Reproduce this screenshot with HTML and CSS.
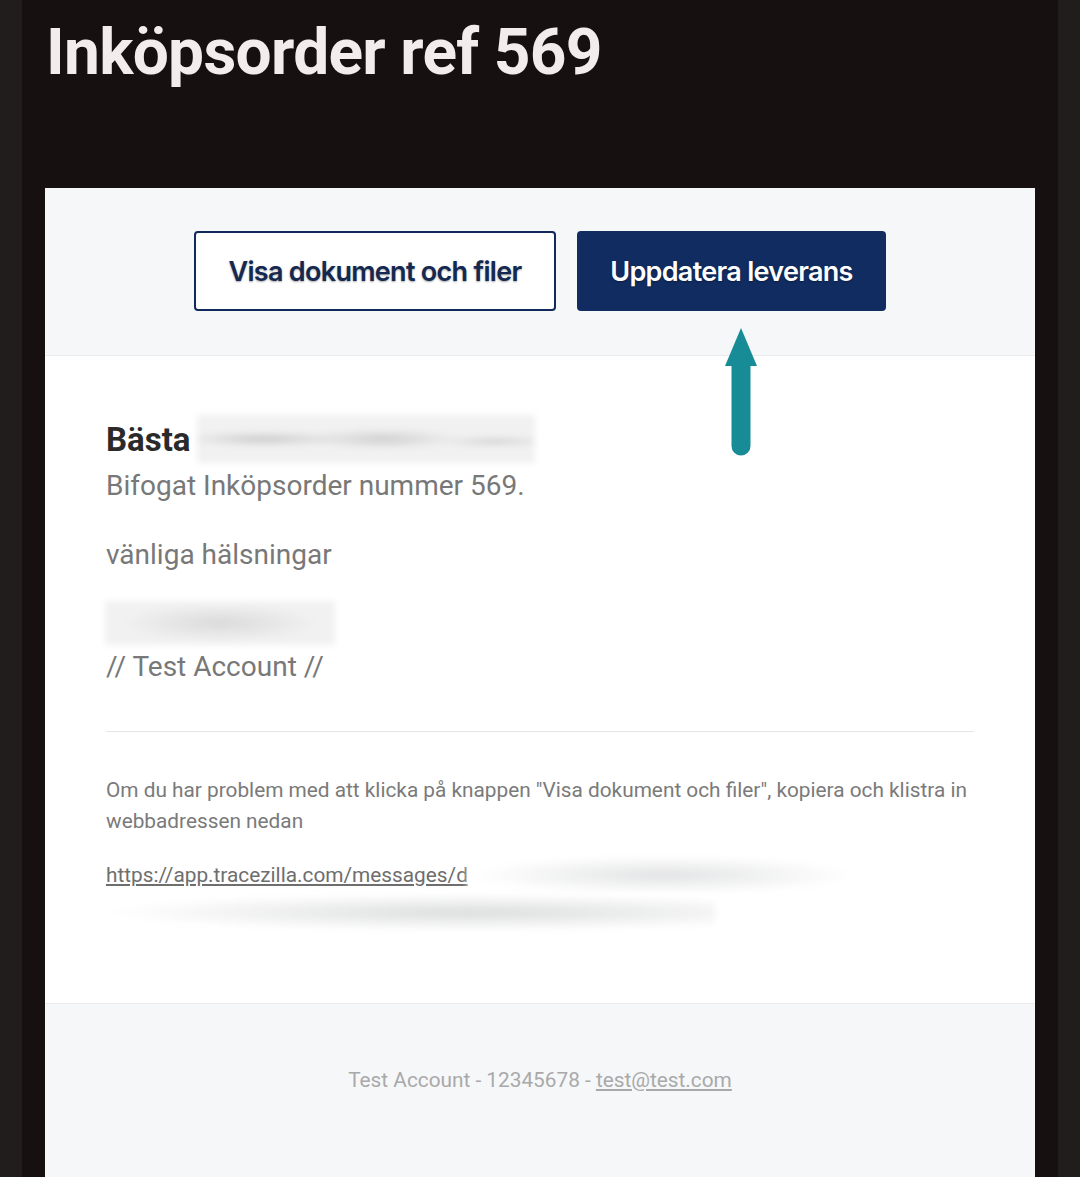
FILE: index.html
```html
<!DOCTYPE html>
<html>
<head>
  <title>Inköpsorder ref 569</title>
  <link rel="stylesheet" href="styles.css">
</head>
<body>

  <div class="ram">
    <h1 class="rubrik">Inköpsorder ref 569</h1>

    <div class="kort">
      <div class="knapp-rad">
        <a class="knapp knapp-kant" href="#">Visa dokument och filer</a>
        <a class="knapp knapp-fylld" href="#">Uppdatera leverans</a>
        <!-- pil som pekar på knappen -->
        <svg class="pil" width="36" height="130" viewBox="0 0 36 130">
          <polygon points="18,0 34,38 2,38" fill="#178c97"/>
          <line x1="18" y1="34" x2="18" y2="118" stroke="#178c97" stroke-width="19" stroke-linecap="round"/>
        </svg>
      </div>

      <div class="innehall">
        <p class="halsning">Bästa <span class="sudd sudd-namn"></span></p>
        <p class="text forsta">Bifogat Inköpsorder nummer 569.</p>
        <p class="text tom-rad">vänliga hälsningar</p>
        <div class="sudd sudd-avsandare"></div>
        <p class="text">// Test Account //</p>

        <hr class="linje">

        <p class="liten">Om du har problem med att klicka på knappen "Visa dokument och filer", kopiera och klistra in webbadressen nedan</p>
        <div class="lank-block">
          <a class="lank" href="#">https://app.tracezilla.com/messages/d</a><span class="sudd sudd-lank1"></span>
          <div class="sudd sudd-lank2"></div>
        </div>
      </div>

      <div class="sidfot">
        Test Account - 12345678 - <a href="#">test@test.com</a>
      </div>
    </div>
  </div>

</body>
</html>
```

FILE: styles.css
```css
body {
  margin: 0;
  background: #221d1d;
  font-family: Roboto, "Noto Sans", sans-serif;
}
.ram {
  margin: 0 22px;
  background: #161010;
  padding: 0 23px;
  min-height: 1177px;
  box-sizing: border-box;
}
.rubrik {
  margin: 0;
  padding-top: 15px;
  height: 188px;
  box-sizing: border-box;
  color: #f3ecec;
  font-size: 64px;
  font-weight: 700;
  line-height: 76px;
  letter-spacing: -0.7px;
  padding-left: 1px;
}
.kort {
  background: #fff;
  min-height: 989px;
}
.knapp-rad {
  position: relative;
  background: #f6f7f9;
  border-bottom: 1px solid #ececec;
  height: 168px;
  box-sizing: border-box;
  display: flex;
  justify-content: center;
  align-items: flex-start;
  gap: 21px;
  padding-top: 43px;
}
.knapp {
  display: flex;
  align-items: center;
  justify-content: center;
  height: 80px;
  box-sizing: border-box;
  border-radius: 4px;
  font-family: Inter, Roboto, sans-serif;
  font-size: 27px;
  font-weight: 600;
  text-decoration: none;
  text-shadow: 0 1px 2px rgba(0,0,0,0.35);
  letter-spacing: -0.7px;
}
.knapp-kant {
  width: 362px;
  background: #fff;
  border: 2px solid #12295c;
  color: #15284f;
}
.knapp-fylld {
  width: 309px;
  background: #112c61;
  color: #fff;
}
.pil {
  position: absolute;
  left: 678px;
  top: 140px;
}
.innehall {
  padding: 58px 61px 72px 61px;
}
.halsning {
  margin: 0;
  font-size: 33px;
  font-weight: 700;
  color: #2a2a2a;
  display: flex;
  align-items: center;
  gap: 6px;
  height: 50px;
}
.text {
  margin: 0;
  font-size: 28px;
  color: #787878;
  line-height: 40px;
}
.forsta {
  margin-top: 2px;
}
.tom-rad {
  margin-top: 29px;
}
.sudd {
  display: inline-block;
  background: #f1f1f1;
  background-image: radial-gradient(ellipse at 20% 50%, #c9c9c9 0, transparent 22%),
    radial-gradient(ellipse at 55% 50%, #cfcfcf 0, transparent 30%),
    radial-gradient(ellipse at 88% 55%, #d0d0d0 0, transparent 14%);
  filter: blur(3px);
}
.sudd-namn {
  width: 338px;
  height: 48px;
}
.sudd-avsandare {
  display: block;
  width: 230px;
  height: 44px;
  margin-top: 26px;
  margin-bottom: 2px;
  margin-left: -1px;
  background-image: radial-gradient(ellipse at 50% 50%, #dadada 0, transparent 60%);
}
.linje {
  border: 0;
  border-top: 1px solid #e6e6e6;
  margin: 44px 0 43px;
}
.liten {
  margin: 0;
  font-size: 20.8px;
  line-height: 31px;
  color: #7a7a7a;
}
.lank-block {
  margin-top: 17px;
  line-height: 38px;
  font-size: 20.8px;
}
.lank {
  color: #6e6e6e;
  vertical-align: middle;
}
.sudd-lank1 {
  width: 390px;
  height: 38px;
  vertical-align: middle;
  background: #fff;
  background-image: radial-gradient(ellipse at 50% 50%, #e2e3e4 0, transparent 70%);
}
.sudd-lank2 {
  display: block;
  width: 615px;
  height: 37px;
  margin-left: -6px;
  background: #fff;
  background-image: radial-gradient(ellipse at 60% 50%, #dcdddd 0, transparent 70%);
}
.sidfot {
  background: #f6f7f9;
  border-top: 1px solid #ececec;
  text-align: center;
  font-size: 20.8px;
  color: #a9a9a9;
  padding: 64px 0 120px;
}
.sidfot a {
  color: #a9a9a9;
}
```
